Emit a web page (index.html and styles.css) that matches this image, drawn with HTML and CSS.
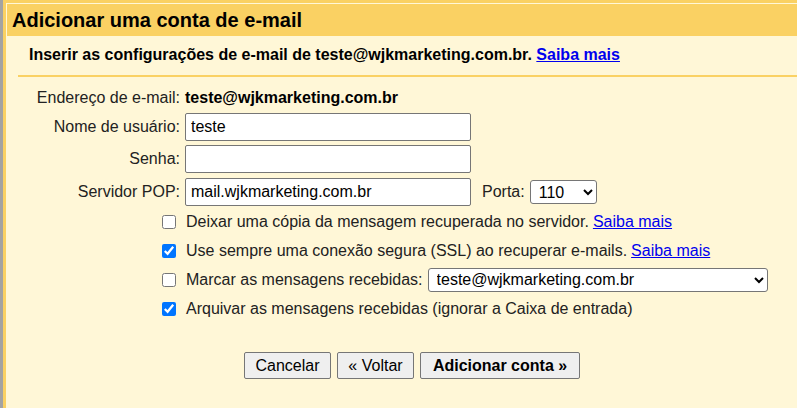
FILE: index.html
```html
<!DOCTYPE html>
<html lang="pt-BR">
<head>
<meta charset="utf-8">
<title>Adicionar uma conta de e-mail</title>
<link rel="stylesheet" href="styles.css">
</head>
<body>
<div class="page">
  <div class="backdrop"></div>
  <div class="dialog">
    <div class="titlebar">Adicionar uma conta de e-mail</div>
    <div class="subhead">Inserir as configurações de e-mail de teste@wjkmarketing.com.br. <a href="#">Saiba mais</a></div>
    <div class="form">
      <div class="row row-a">
        <div class="label">Endereço de e-mail:</div>
        <div class="value strong">teste@wjkmarketing.com.br</div>
      </div>
      <div class="row row-b">
        <div class="label">Nome de usuário:</div>
        <div class="value"><input class="text" type="text" value="teste"></div>
      </div>
      <div class="row row-c">
        <div class="label">Senha:</div>
        <div class="value"><input class="text" type="password" value=""></div>
      </div>
      <div class="row row-d">
        <div class="label">Servidor POP:</div>
        <div class="value">
          <input class="text" type="text" value="mail.wjkmarketing.com.br">
          <span class="porta">Porta:</span>
          <select class="sel sel-port"><option>110</option></select>
        </div>
      </div>
      <div class="row row-check row-e">
        <div class="label"><input class="cb" type="checkbox"></div>
        <div class="value">Deixar uma cópia da mensagem recuperada no servidor. <a href="#">Saiba mais</a></div>
      </div>
      <div class="row row-check">
        <div class="label"><input class="cb" type="checkbox" checked></div>
        <div class="value">Use sempre uma conexão segura (SSL) ao recuperar e-mails. <a href="#">Saiba mais</a></div>
      </div>
      <div class="row row-check">
        <div class="label"><input class="cb" type="checkbox"></div>
        <div class="value">Marcar as mensagens recebidas: <select class="sel sel-label"><option>teste@wjkmarketing.com.br</option></select></div>
      </div>
      <div class="row row-check">
        <div class="label"><input class="cb" type="checkbox" checked></div>
        <div class="value">Arquivar as mensagens recebidas (ignorar a Caixa de entrada)</div>
      </div>
      <div class="buttons">
        <button class="btn btn-cancel">Cancelar</button>
        <button class="btn btn-back">« Voltar</button>
        <button class="btn btn-add">Adicionar conta »</button>
      </div>
    </div>
  </div>
</div>
</body>
</html>
```

FILE: styles.css
```css
html, body {
  margin: 0;
  padding: 0;
  overflow: hidden;
  background: #fff7d7;
}
body {
  font-family: "Liberation Sans", Arial, sans-serif;
  font-size: 16px;
  color: #222;
}
.page {
  display: flex;
  width: 797px;
  height: 408px;
  overflow: hidden;
}
.backdrop {
  flex: 0 0 3px;
  background: #a3a3a3;
}
.dialog {
  flex: 0 0 830px;
  background: #fff7d7;
  border-top: 3px solid #fad163;
  border-left: 3px solid #fad163;
  height: 405px;
}
.titlebar {
  margin: 1px 0 0 1px;
  height: 32px;
  background: #fad163;
  padding-left: 5px;
  font-weight: bold;
  font-size: 20px;
  line-height: 32px;
  color: #000;
}
.subhead {
  margin-left: 12px;
  height: 39px;
  border-bottom: 2px solid #fad163;
  padding-left: 11px;
  font-weight: bold;
  line-height: 38px;
  color: #000;
}
a {
  color: #0000ee;
  text-decoration: underline;
}
.form {
  display: flex;
  flex-direction: column;
  padding-top: 11px;
}
.row {
  display: flex;
  align-items: center;
}
.label {
  flex: 0 0 174px;
  text-align: right;
  display: flex;
  justify-content: flex-end;
  align-items: center;
}
.value {
  margin-left: 5px;
  display: flex;
  align-items: center;
  white-space: nowrap;
}
.value a { margin-left: 4px; }
.strong {
  font-weight: bold;
  color: #000;
}
.row-a { height: 20px; }
.row-b { height: 28px; margin-top: 5px; }
.row-c { height: 28px; margin-top: 4px; }
.row-d { height: 28px; margin-top: 5px; }
.row-check { height: 29px; }
.row-e { margin-top: 1px; }
.row-check .value { margin-left: 6px; }
.text {
  box-sizing: border-box;
  width: 286px;
  height: 28px;
  margin: 0;
  border: 1px solid #767676;
  border-radius: 2px;
  padding: 0 5px;
  font-family: "Liberation Sans", Arial, sans-serif;
  font-size: 16px;
  color: #000;
  background: #fff;
}
.porta { margin-left: 11px; }
.sel {
  box-sizing: border-box;
  height: 24px;
  margin: 0;
  border: 1px solid #767676;
  border-radius: 3px;
  background: #fff;
  font-family: "Liberation Sans", Arial, sans-serif;
  font-size: 16px;
  color: #000;
  padding: 0 4px;
}
.sel-port { width: 67px; margin-left: 5px; }
.sel-label { width: 340px; margin-left: 5px; }
.cb {
  width: 14px;
  height: 14px;
  margin: 0 4px 0 0;
}
.buttons {
  display: flex;
  gap: 6px;
  margin-top: 29px;
  padding-left: 238px;
}
.btn {
  box-sizing: border-box;
  height: 27px;
  margin: 0;
  border: 1px solid #767676;
  border-radius: 2px;
  background: #efefef;
  font-family: "Liberation Sans", Arial, sans-serif;
  font-size: 16px;
  color: #000;
  padding: 0 6px;
}
.btn-cancel { width: 87px; }
.btn-back { width: 77px; }
.btn-add { width: 160px; font-weight: bold; }
```
